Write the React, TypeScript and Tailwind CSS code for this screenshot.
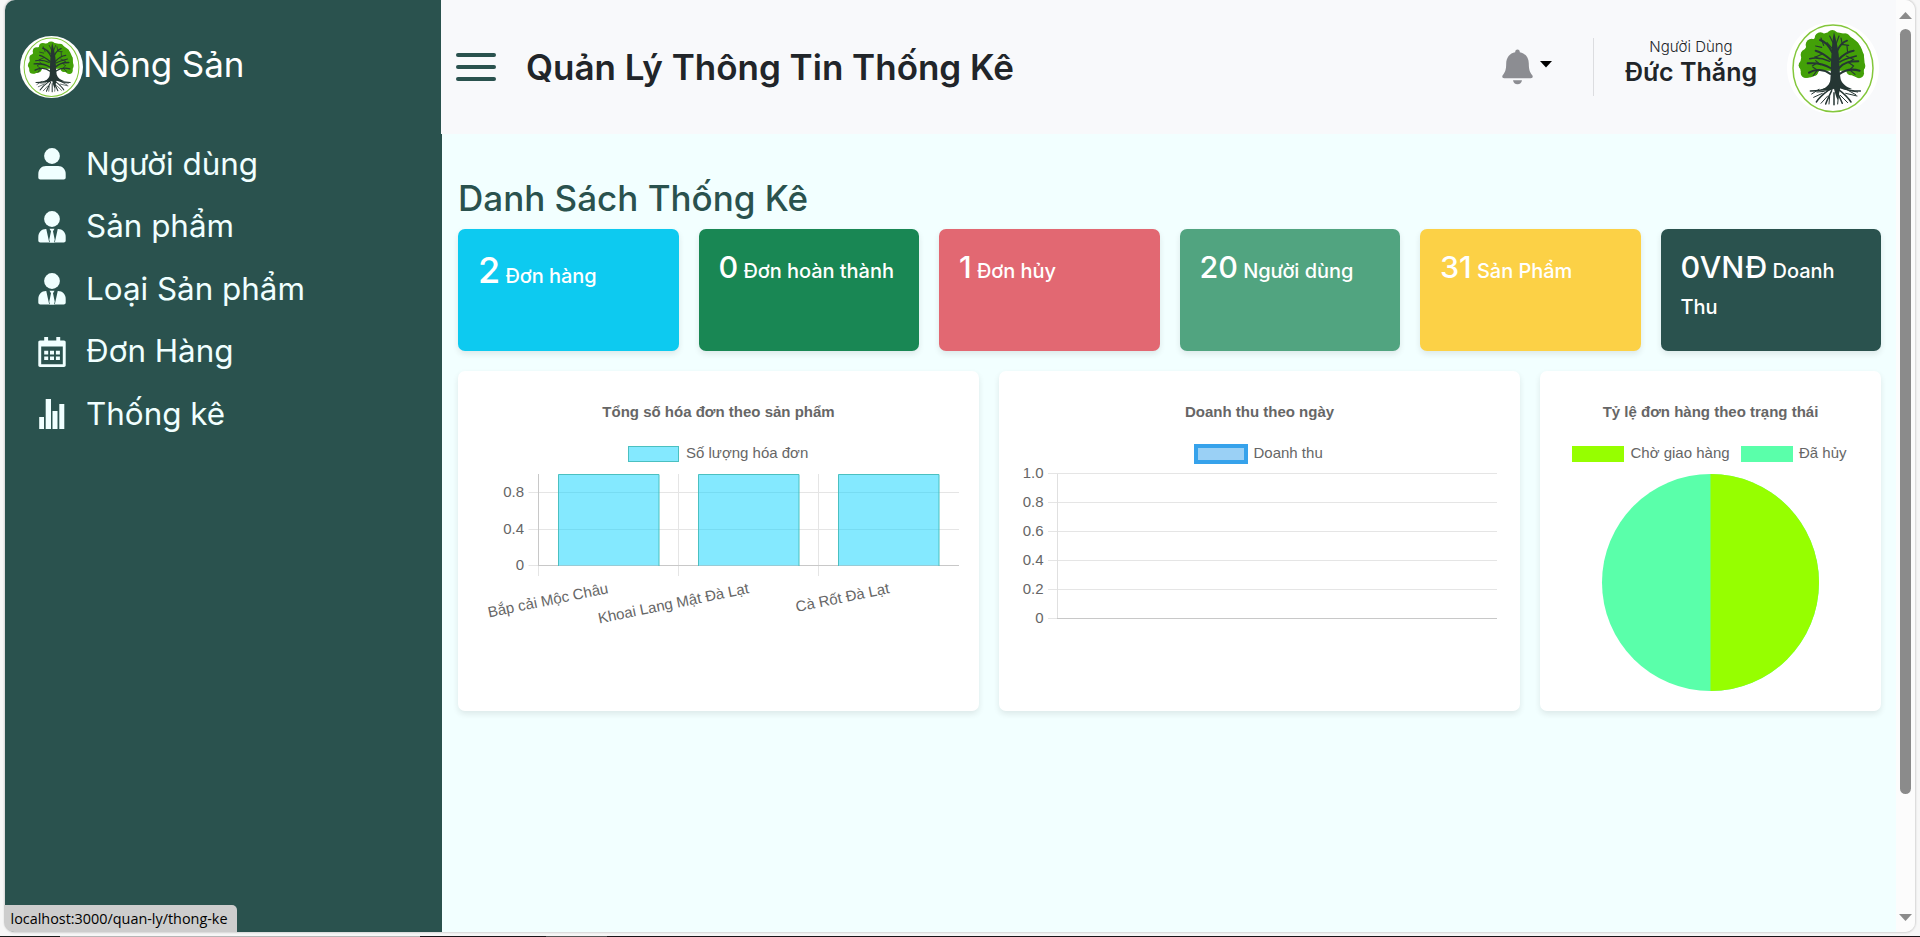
import React from "react";

const chartFont = "'Liberation Sans', Arial, sans-serif";

function TreeLogo({ className }: { className: string }) {
  return (
    <svg viewBox="22 20 276 276" preserveAspectRatio="none" className={className}>
      <circle cx="160" cy="158" r="138" fill="#fff" />
      <ellipse cx="160" cy="159" rx="120" ry="130" fill="none" stroke="#84c73c" strokeWidth="4.5" />
      <g fill="#43a008">
        <path d="M66 176C54 150 66 108 88 84c20-22 46-34 72-34s56 10 76 34c18 22 24 64 14 92-8 14-36 10-46-10h-86c-10 22-44 28-52 10z" />
        <circle cx="72" cy="150" r="15" />
        <circle cx="80" cy="118" r="17" />
        <circle cx="96" cy="88" r="18" />
        <circle cx="122" cy="68" r="17" />
        <circle cx="158" cy="61" r="17" />
        <circle cx="196" cy="71" r="17" />
        <circle cx="222" cy="92" r="16" />
        <circle cx="237" cy="122" r="16" />
        <circle cx="242" cy="152" r="15" />
        <circle cx="79" cy="172" r="16" />
        <circle cx="238" cy="174" r="15" />
        <circle cx="102" cy="168" r="14" />
        <circle cx="214" cy="166" r="14" />
      </g>
      <path
        fill="#253633"
        d="M163 50c5 20 11 42 14 66 2 24 3 58 6 76 5 14 16 23 34 29-15 2-26 0-35-3-3 10-4 22-8 36-5-10-8-22-11-34-8 6-26 8-44 5 20-6 32-18 33-32 2-20 1-46 3-72 2-26 3-50 8-71z"
      />
      <g fill="none" stroke="#253633" strokeWidth="6" strokeLinecap="round">
        <path d="M154 134c-16-14-30-24-46-28M152 158c-18-12-42-16-68-14M152 176c-18-14-44-16-64-4M176 134c14-16 28-26 46-28M178 158c14-16 30-20 58-20M180 176c18-14 38-16 60-10M157 110c-10-20-22-32-36-36M172 108c8-18 18-28 30-32" />
        <path d="M150 138c-22-10-42-12-60-8M180 140c16-10 36-14 50-18" strokeWidth="4.5" />
        <path
          d="M128 116l-22 10M126 96l-18-4M132 90l-8-22M118 130l-12-6M122 148l-14-12M110 144l-12 8M116 166l-16-10M112 166l-12 16M204 112l-2-20M200 122l20 10M206 142l16-10M208 142l14 10M210 164l10-10M212 165l14 12M188 88l-4-20M191 88l16 2M160 82l-10-20M170 84l8-22M158 100l-16-18"
          strokeWidth="3.5"
        />
        <path d="M146 216c-14 8-30 11-54 11M180 216c20 8 40 11 62 11M150 222c-16 12-28 20-40 38M176 222c16 12 28 22 38 38M156 226c-8 18-14 28-18 40M170 226c8 14 14 30 18 38M163 232v36" strokeWidth="4.5" />
        <path d="M118 222l-22 14M128 234l-26 12M134 228l-22 2M200 222l28 16M198 234l34 8M144 242l-20 22M182 240l22 22M150 244l-2 22M176 244l-2 22M210 226l24 4" strokeWidth="3" />
      </g>
    </svg>
  );
}

function PersonIcon({ tie = false }: { tie?: boolean }) {
  return (
    <svg viewBox="0 0 28 32" className="h-8 w-7" fill="#f0ffff">
      <circle cx="14" cy="8" r="7.9" />
      <path d="M8 18h12c4.500 0 7.700 3.500 7.700 8v3.500c0 1.200-.8 2-2 2H2.300c-1.200 0-2-.8-2-2V26c0-4.500 3.200-8 7.700-8z" />
      {tie && (
        <g>
          <path fill="#2a524e" d="M8 16.800h12l-3.100 14.100h-5.800z" />
          <path d="M11.500 17.700h5l-1.500 2.500 1.700 8.300-.6 3h-4.200l-.6-3 1.700-8.300z" />
        </g>
      )}
    </svg>
  );
}

function CalendarIcon() {
  return (
    <svg viewBox="0 0 28 32" className="h-8 w-7" fill="#f0ffff">
      <path
        fillRule="evenodd"
        d="M6.200 1h3.900v3.600h8.200V1h3.900v3.600H26c1 0 1.700.8 1.700 1.700v23c0 1-.7 1.700-1.700 1.700H2c-1 0-1.700-.7-1.700-1.700v-23c0-.9.7-1.700 1.700-1.700h4.200zM3.200 10.500v17.800h21.600V10.500z"
      />
      <path d="M6.200 14.800h4v3.700h-4zM12 14.800h4v3.700h-4zM17.900 14.800h4v3.700h-4zM6.200 20.400h4v3.700h-4zM12 20.400h4v3.700h-4zM17.900 20.400h4v3.700h-4z" />
    </svg>
  );
}

function BarsIcon() {
  return (
    <svg viewBox="0 0 28 32" className="h-8 w-7" fill="#f0ffff">
      <path d="M1.200 19h4.800v12H1.200zM7.700 1h5.300v30H7.700zM14.500 13h5v18h-5zM21.300 6h5v25h-5z" />
    </svg>
  );
}

const menu = [
  { label: "Người dùng", icon: <PersonIcon /> },
  { label: "Sản phẩm", icon: <PersonIcon tie /> },
  { label: "Loại Sản phẩm", icon: <PersonIcon tie /> },
  { label: "Đơn Hàng", icon: <CalendarIcon /> },
  { label: "Thống kê", icon: <BarsIcon /> },
];

function Sidebar() {
  return (
    <aside className="flex w-[437px] shrink-0 flex-col bg-[#2a524e]">
      <div className="flex h-[133px] items-center pt-px pl-[15px]">
        <TreeLogo className="h-[62px] w-[63px]" />
        <span className="pb-[5px] text-[35px] leading-none tracking-[-0.1px] text-white">Nông Sản</span>
      </div>
      <nav className="flex flex-col">
        {menu.map((item) => (
          <a key={item.label} className="flex h-[62.5px] items-center pl-[33px]">
            {item.icon}
            <span className="pl-[20px] text-[31.4px] leading-none text-[#f0ffff]">{item.label}</span>
          </a>
        ))}
      </nav>
    </aside>
  );
}

function Header() {
  return (
    <header className="-ml-px flex h-[134px] items-center bg-[#f8f9fb] pr-[17px] pl-[15px] text-[#212529]">
      <div className="flex flex-col gap-2">
        <span className="h-1 w-10 rounded-full bg-[#2a524e]" />
        <span className="h-1 w-10 rounded-full bg-[#2a524e]" />
        <span className="h-1 w-10 rounded-full bg-[#2a524e]" />
      </div>
      <h1 className="pt-px pl-[30px] text-[35px] leading-none font-semibold">Quản Lý Thông Tin Thống Kê</h1>
      <div className="ml-auto flex items-center">
        <svg viewBox="0 0 31 36" className="h-9 w-[31px]" fill="#8c8d92">
          <path d="M15.500.5c1.500 0 2.300 1 2.300 2.700 5.500 1 9 5.500 9 11.300 0 6 1 8.500 3.300 11.500 1.300 1.700.5 3.200-1.300 3.200H2.200C.4 29.200-.4 27.700.9 26c2.300-3 3.300-5.500 3.300-11.500 0-5.800 3.500-10.300 9-11.300 0-1.700.8-2.700 2.300-2.700zM11 31.200h9c-.5 2.500-2 4-4.500 4s-4-1.500-4.500-4z" />
        </svg>
        <svg viewBox="0 0 12 7" className="mb-1.5 ml-[7px] h-[7px] w-3">
          <path d="M0 0h12L6 6.500z" fill="#000" />
        </svg>
        <div className="ml-[41px] h-[58px] w-px bg-[#dcdde0]" />
        <div className="ml-[30px] flex w-[134px] flex-col items-center pb-[13px] whitespace-nowrap">
          <span className="text-[15px] leading-[22px] font-light">Người Dùng</span>
          <span className="text-[25px] leading-[28px] font-semibold">Đức Thắng</span>
        </div>
        <TreeLogo className="mt-px ml-[29px] h-[92px] w-[92px]" />
      </div>
    </header>
  );
}

const stats = [
  { value: "2", label: "Đơn hàng", bg: "bg-[#0dcaf0]", size: "text-[36px] leading-[54px]" },
  { value: "0", label: "Đơn hoàn thành", bg: "bg-[#198754]", size: "text-[30.5px] leading-[48px]" },
  { value: "1", label: "Đơn hủy", bg: "bg-[#e26872]", size: "text-[30.5px] leading-[48px]" },
  { value: "20", label: "Người dùng", bg: "bg-[#51a480]", size: "text-[30.5px] leading-[48px]" },
  { value: "31", label: "Sản Phẩm", bg: "bg-[#fcd146]", size: "text-[30.5px] leading-[48px]" },
  { value: "0VNĐ", label: "Doanh Thu", bg: "bg-[#2a524e]", size: "text-[30.5px] leading-[48px]" },
];

const cardShadow = "shadow-[0_3px_6px_rgba(0,0,0,0.09)]";

function StatCards() {
  return (
    <div className="grid grid-cols-6 gap-5">
      {stats.map((s) => (
        <div key={s.label} className={`h-[122px] rounded-[7px] px-[20px] pt-[14px] font-medium text-white text-[20px] leading-[33px] tracking-[-0.05px] ${s.bg} ${cardShadow}`}>
          <span className={s.size}>{s.value}</span> {s.label}
        </div>
      ))}
    </div>
  );
}

function BarChart() {
  const ticks = [
    { y: 121.5, label: "0.8" },
    { y: 158.5, label: "0.4" },
    { y: 194.500, label: "0" },
  ];
  const bars = [100.5, 240.5, 380.5];
  const labels = [
    { text: "Bắp cải Mộc Châu", x: 151 },
    { text: "Khoai Lang Mật Đà Lạt", x: 291.5 },
    { text: "Cà Rốt Đà Lạt", x: 432 },
  ];
  return (
    <svg width="521" height="340" fontFamily={chartFont} fontSize="15" fill="#666">
      <text x="260.500" y="46" textAnchor="middle" fontWeight="bold">Tổng số hóa đơn theo sản phẩm</text>
      <rect x="170.500" y="75.500" width="50" height="15" fill="#84e9ff" stroke="#4bc0c0" />
      <text x="228" y="87">Số lượng hóa đơn</text>
      {ticks.map((t) => (
        <g key={t.label}>
          <path d={`M70.500 ${t.y}H501`} stroke="#e5e5e5" />
          <text x="66" y={t.y + 4.5} textAnchor="end">{t.label}</text>
        </g>
      ))}
      <path d="M220.500 103v102M360.500 103v102M80.500 194v11" stroke="#e5e5e5" />
      <path d="M80.500 103v92M80.500 194.500H501" stroke="#c8c8c8" />
      {bars.map((x) => (
        <g key={x}>
          <rect x={x} y="103" width="100.500" height="91.500" fill="rgba(10,211,255,0.5)" />
          <path d={`M${x} 195V103.500h100.500V195`} fill="none" stroke="#4bc0c0" />
        </g>
      ))}
      {labels.map((l) => (
        <text key={l.text} x={l.x} y="222" textAnchor="end" transform={`rotate(-11.500 ${l.x} 222)`}>{l.text}</text>
      ))}
    </svg>
  );
}

function LineChart() {
  const ticks = ["1.0", "0.8", "0.6", "0.4", "0.2", "0"];
  return (
    <svg width="521" height="340" fontFamily={chartFont} fontSize="15" fill="#666">
      <text x="260.500" y="46" textAnchor="middle" fontWeight="bold">Doanh thu theo ngày</text>
      <rect x="197" y="75" width="50" height="16" fill="#9ad0f5" stroke="#36a2eb" strokeWidth="4" />
      <text x="254.500" y="87">Doanh thu</text>
      {ticks.map((t, i) => (
        <g key={t}>
          <path d={`M49 ${102.5 + i * 29}H498`} stroke="#e5e5e5" />
          <text x="44.500" y={106.5 + i * 29} textAnchor="end">{t}</text>
        </g>
      ))}
      <path d="M58.500 103v145" stroke="#e0e0e0" />
      <path d="M58 247.500H498" stroke="#c8c8c8" />
    </svg>
  );
}

function PieChart() {
  return (
    <svg width="341" height="340" fontFamily={chartFont} fontSize="15" fill="#666">
      <text x="170.500" y="46" textAnchor="middle" fontWeight="bold">Tỷ lệ đơn hàng theo trạng thái</text>
      <rect x="32" y="75" width="52" height="16" fill="#96ff00" />
      <text x="90.500" y="87">Chờ giao hàng</text>
      <rect x="201" y="75" width="52" height="16" fill="#5affaa" />
      <text x="259" y="87">Đã hủy</text>
      <circle cx="170.500" cy="211.500" r="108.500" fill="#5affaa" />
      <path d="M170.500 103a108.500 108.500 0 0 1 0 217z" fill="#96ff00" />
    </svg>
  );
}

function Scrollbar() {
  return (
    <div className="flex w-[19px] shrink-0 flex-col items-center bg-[#fcfcfc] pt-3 pr-px pb-[11px]">
      <svg viewBox="0 0 13 7" className="h-[7px] w-[13px]"><path d="M6.500 0L13 7H0z" fill="#8b8b8b" /></svg>
      <div className="mt-2.5 h-[765px] w-[11px] rounded-full bg-[#8b8b8b]" />
      <svg viewBox="0 0 13 7" className="mt-auto h-[7px] w-[13px]"><path d="M0 0h13L6.500 7z" fill="#8b8b8b" /></svg>
    </div>
  );
}

export default function App() {
  return (
    <div className="relative flex h-[937px] w-[1920px] flex-col overflow-hidden bg-[#f7f7f7] font-[Inter,sans-serif]">
      <div className="ml-[5px] flex h-[932px] w-[1910px] overflow-hidden rounded-[10px] shadow-[0_0_2px_1px_rgba(0,0,0,0.14)]">
        <Sidebar />
        <main className="min-w-0 flex-1 bg-[#f2ffff]">
          <Header />
          <div className="pr-[15px] pl-4">
            <h2 className="h-[95px] pt-[47px] text-[35px] leading-none font-medium text-[#2a524e]">Danh Sách Thống Kê</h2>
            <StatCards />
            <div className="mt-5 flex gap-5">
              <div className={`rounded-[7px] bg-white ${cardShadow}`}><BarChart /></div>
              <div className={`rounded-[7px] bg-white ${cardShadow}`}><LineChart /></div>
              <div className={`rounded-[7px] bg-white ${cardShadow}`}><PieChart /></div>
            </div>
          </div>
        </main>
        <Scrollbar />
      </div>
      <div className="mt-auto flex h-px">
        <div className="w-[60px] bg-[#1a1a1a]" />
        <div className="w-[360px] bg-[#b5b5b5]" />
        <div className="w-[126px] bg-[#1a1418]" />
        <div className="w-[61px] bg-[#555]" />
        <div className="flex-1 bg-[#1a1418]" />
      </div>
      <div className="absolute top-[905px] left-1 flex h-[27px] w-[233px] items-center rounded-tr-[5px] rounded-bl-[10px] bg-[#cdcdcd] pl-[6.5px] font-['Open_Sans',sans-serif] text-[14.4px] whitespace-nowrap text-black">
        localhost:3000/quan-ly/thong-ke
      </div>
    </div>
  );
}
